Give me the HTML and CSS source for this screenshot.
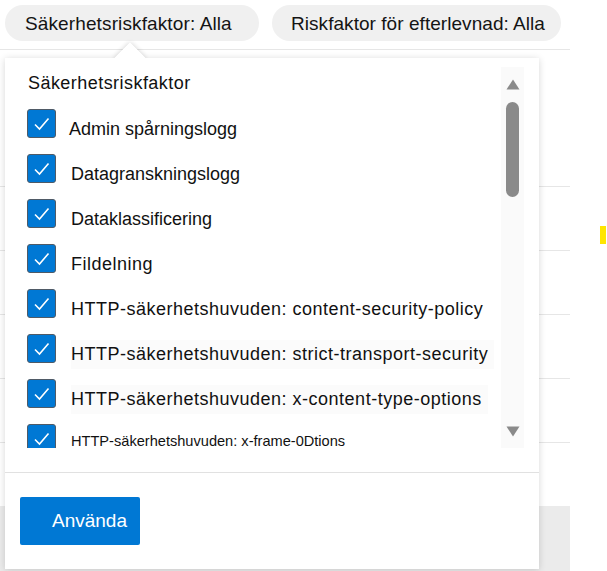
FILE: index.html
```html
<!DOCTYPE html>
<html lang="sv">
<head>
<meta charset="utf-8">
<title>Säkerhetsriskfaktor</title>
<link rel="stylesheet" href="styles.css">
</head>
<body>
<div class="page">
  <div class="filters">
    <div class="pill pill-security">Säkerhetsriskfaktor: Alla</div>
    <div class="pill pill-compliance">Riskfaktor för efterlevnad: Alla</div>
  </div>
  <div class="table">
    <div class="spacer"></div>
    <div class="row"></div>
    <div class="row"></div>
    <div class="row"></div>
    <div class="row"></div>
    <div class="row"></div>
    <div class="footer"></div>
  </div>
  <div class="marker"></div>

  <div class="panel">
    <div class="caret-shadow"></div>
    <div class="panel-body">
      <div class="list-area">
        <div class="list">
          <div class="list-title">Säkerhetsriskfaktor</div>
          <div class="item item-tight"><span class="box"><svg viewBox="0 0 29 29" width="29" height="29"><path d="M8 15.5 L12.5 20 L21.5 9.5" fill="none" stroke="#fff" stroke-width="1.6"/></svg></span><span class="label">Admin spårningslogg</span></div>
          <div class="item"><span class="box"><svg viewBox="0 0 29 29" width="29" height="29"><path d="M8 15.5 L12.5 20 L21.5 9.5" fill="none" stroke="#fff" stroke-width="1.6"/></svg></span><span class="label">Datagranskningslogg</span></div>
          <div class="item"><span class="box"><svg viewBox="0 0 29 29" width="29" height="29"><path d="M8 15.5 L12.5 20 L21.5 9.5" fill="none" stroke="#fff" stroke-width="1.6"/></svg></span><span class="label">Dataklassificering</span></div>
          <div class="item"><span class="box"><svg viewBox="0 0 29 29" width="29" height="29"><path d="M8 15.5 L12.5 20 L21.5 9.5" fill="none" stroke="#fff" stroke-width="1.6"/></svg></span><span class="label label-wide">Fildelning</span></div>
          <div class="item"><span class="box"><svg viewBox="0 0 29 29" width="29" height="29"><path d="M8 15.5 L12.5 20 L21.5 9.5" fill="none" stroke="#fff" stroke-width="1.6"/></svg></span><span class="label label-http">HTTP-säkerhetshuvuden: content-security-policy</span></div>
          <div class="item"><span class="box"><svg viewBox="0 0 29 29" width="29" height="29"><path d="M8 15.5 L12.5 20 L21.5 9.5" fill="none" stroke="#fff" stroke-width="1.6"/></svg></span><span class="label label-http label-shade">HTTP-säkerhetshuvuden: strict-transport-security</span></div>
          <div class="item"><span class="box"><svg viewBox="0 0 29 29" width="29" height="29"><path d="M8 15.5 L12.5 20 L21.5 9.5" fill="none" stroke="#fff" stroke-width="1.6"/></svg></span><span class="label label-http label-shade">HTTP-säkerhetshuvuden: x-content-type-options</span></div>
          <div class="item item-small"><span class="box"><svg viewBox="0 0 29 29" width="29" height="29"><path d="M8 15.5 L12.5 20 L21.5 9.5" fill="none" stroke="#fff" stroke-width="1.6"/></svg></span><span class="label">HTTP-säkerhetshuvuden: x-frame-0Dtions</span></div>
        </div>
        <div class="scrollbar">
          <svg class="arrow" viewBox="0 0 14 11" width="14" height="11"><path d="M7 0.5 L13.5 10.5 L0.5 10.5 Z" fill="#8a8a8a"/></svg>
          <div class="thumb"></div>
          <div class="track-rest"></div>
          <svg class="arrow" viewBox="0 0 14 11" width="14" height="11"><path d="M0.5 0.5 L13.5 0.5 L7 10.5 Z" fill="#8a8a8a"/></svg>
        </div>
      </div>
      <div class="divider"></div>
      <div class="actions">
        <button class="apply">Använda</button>
      </div>
    </div>
    <div class="caret"></div>
  </div>
</div>
</body>
</html>
```

FILE: styles.css
```css
* { box-sizing: border-box; }

html, body {
  margin: 0;
  padding: 0;
  background: #ffffff;
}

body {
  font-family: "Liberation Sans", Arial, sans-serif;
  color: #111111;
  width: 607px;
  height: 571px;
  overflow: hidden;
}

.page {
  position: relative;
  width: 607px;
  height: 571px;
}

.filters {
  display: flex;
  gap: 13px;
  padding: 5px 0 0 5px;
  height: 50px;
  width: 570px;
  border-bottom: 1px solid #e6e6e6;
}

.pill {
  height: 36px;
  border-radius: 18px;
  background: #f0f0f0;
  font-size: 19px;
  line-height: 37px;
  white-space: nowrap;
  color: #141414;
  letter-spacing: 0.12px;
}

.pill-security {
  width: 254px;
  padding-left: 20px;
}

.pill-compliance {
  width: 289px;
  padding-left: 19px;
  letter-spacing: 0.05px;
}

.table {
  width: 570px;
  display: flex;
  flex-direction: column;
}

.spacer {
  height: 136px;
}

.row {
  height: 64px;
  border-top: 1px solid #e6e6e6;
}

.footer {
  height: 65px;
  background: #ebebeb;
}

.marker {
  position: absolute;
  left: 600px;
  top: 226px;
  width: 6px;
  height: 18px;
  background: #ffe600;
}

.panel {
  position: absolute;
  left: 5px;
  top: 58px;
  width: 534px;
  height: 511px;
}

.caret,
.caret-shadow {
  position: absolute;
  left: 114px;
  top: -11px;
  width: 22px;
  height: 22px;
  background: #ffffff;
  transform: rotate(45deg);
}

.caret-shadow {
  box-shadow: 0 0 5px rgba(0, 0, 0, 0.2);
}

.panel-body {
  position: relative;
  height: 100%;
  background: #ffffff;
  box-shadow: 0 1px 7px rgba(0, 0, 0, 0.16);
  display: flex;
  flex-direction: column;
}

.list-area {
  height: 390px;
  display: flex;
  overflow: hidden;
}

.list {
  flex: 1;
  padding: 15px 0 0 22px;
  overflow: hidden;
}

.list-title {
  font-size: 18px;
  line-height: 20px;
  padding-left: 1px;
  margin-bottom: 16px;
  letter-spacing: 0.45px;
  color: #111111;
}

.item {
  display: flex;
  align-items: flex-start;
  height: 45px;
  gap: 15px;
}

.item-tight {
  gap: 13px;
}

.box {
  flex: none;
  width: 29px;
  height: 29px;
  border-radius: 3px;
  background: #0078d4;
  border: 1px solid #4f5a66;
  display: flex;
  align-items: center;
  justify-content: center;
  overflow: hidden;
}

.box svg {
  display: block;
  flex: none;
}

.label {
  font-size: 18px;
  line-height: 20px;
  padding-top: 10px;
  white-space: nowrap;
  color: #111111;
}

.label-wide {
  letter-spacing: 0.5px;
}

.label-http {
  letter-spacing: 0.5px;
}

.label-shade {
  background: linear-gradient(#ffffff 0 6px, #fbfbfb 6px 100%);
  padding-right: 6px;
  height: 35px;
}

.item-small .label {
  font-size: 14.6px;
  padding-top: 7px;
}

.scrollbar {
  flex: none;
  width: 23px;
  margin: 9px 15px 0 0;
  background: #fafafa;
  display: flex;
  flex-direction: column;
  align-items: center;
  padding-top: 12px;
}

.arrow {
  display: block;
  flex: none;
}

.thumb {
  margin-top: 12px;
  width: 13px;
  height: 95px;
  border-radius: 7px;
  background: #8a8a8a;
}

.track-rest {
  flex: none;
  height: 229px;
}

.divider {
  margin-top: 24px;
  height: 1px;
  background: #e1e1e1;
}

.actions {
  padding: 24px 0 0 15px;
}

.apply {
  width: 120px;
  height: 48px;
  border: none;
  border-radius: 2px;
  background: #0078d4;
  color: #ffffff;
  font-family: "Liberation Sans", Arial, sans-serif;
  font-size: 19px;
  text-align: left;
  padding: 0 0 0 32px;
  line-height: 48px;
}
```
